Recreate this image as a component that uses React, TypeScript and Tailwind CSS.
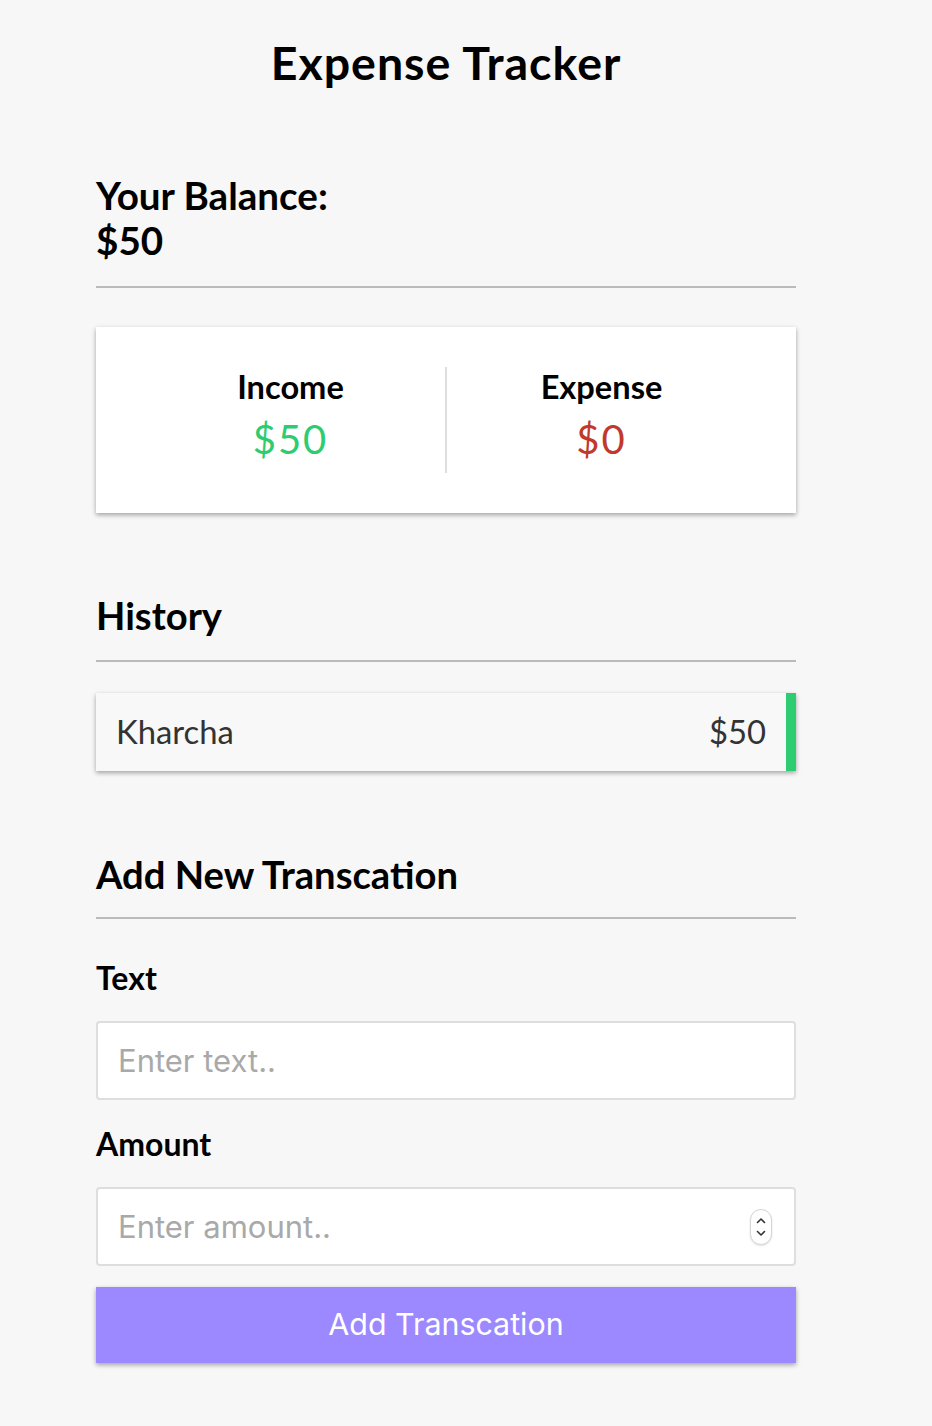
import { useState } from "react";

const lato = "font-['Lato','Noto_Sans',sans-serif]";
const ui = "font-['Inter','Roboto',sans-serif]";

function Spinner() {
  return (
    <div className="pointer-events-none absolute right-[24px] top-[22px] flex h-[36px] w-[22px] flex-col items-center justify-center gap-[6px] rounded-full border border-[#d6d6d6] bg-white shadow-[0_1px_2px_rgba(0,0,0,0.12)]">
      <svg width="10" height="7" viewBox="0 0 10 7" fill="none">
        <path d="M1.5 5.5L5 2L8.5 5.5" stroke="#333" strokeWidth="1.6" strokeLinecap="round" strokeLinejoin="round" />
      </svg>
      <svg width="10" height="7" viewBox="0 0 10 7" fill="none">
        <path d="M1.5 1.5L5 5L8.5 1.5" stroke="#333" strokeWidth="1.6" strokeLinecap="round" strokeLinejoin="round" />
      </svg>
    </div>
  );
}

export default function App() {
  const [text, setText] = useState("");
  const [amount, setAmount] = useState("");

  return (
    <div className={`min-h-[1426px] bg-[#f7f7f7] pl-[96px] text-black ${lato}`}>
      <div className="w-[700px] pb-[60px]">
        <h2 className="pt-[35px] text-center text-[46.5px] font-bold leading-[54px] tracking-[1px]">
          Expense Tracker
        </h2>

        <div className="mt-[84px] border-b-2 border-[#bbb] pb-[23px]">
          <h4 className="text-[38.6px] font-bold leading-[45px]">Your Balance:</h4>
          <h1 className="text-[38.6px] font-bold leading-[45px]">$50</h1>
        </div>

        <div className="mt-[39px] flex bg-white p-[40px] shadow-[0_2px_6px_rgba(0,0,0,0.12),0_2px_4px_rgba(0,0,0,0.24)]">
          <div className="flex-1 border-r-2 border-[#dedede] text-center">
            <h4 className="text-[32.6px] font-bold leading-[40px]">Income</h4>
            <p className="mb-[6px] mt-[4px] text-[40px] leading-[56px] tracking-[2px] text-[#2ecc71]">$50</p>
          </div>
          <div className="flex-1 text-center">
            <h4 className="text-[32.6px] font-bold leading-[40px]">Expense</h4>
            <p className="mb-[6px] mt-[4px] text-[40px] leading-[56px] tracking-[2px] text-[#c0392b]">$0</p>
          </div>
        </div>

        <h3 className="mt-[78px] border-b-2 border-[#bbb] pb-[21px] text-[38.2px] font-bold leading-[48px]">
          History
        </h3>
        <ul className="mt-[31px]">
          <li className="flex justify-between border-r-[10px] border-[#2ecc71] bg-[#f8f8f8] p-[20px] text-[32.8px] leading-[38px] text-[#333] shadow-[0_2px_6px_rgba(0,0,0,0.12),0_2px_4px_rgba(0,0,0,0.24)]">
            <span>Kharcha</span>
            <span>$50</span>
          </li>
        </ul>

        <h3 className="mt-[79px] border-b-2 border-[#bbb] pb-[19px] text-[38.2px] font-bold leading-[48px]">
          Add New Transcation
        </h3>

        <form onSubmit={(e) => e.preventDefault()}>
          <label className="mt-[40px] block text-[32px] font-bold leading-[38px]">Text</label>
          <input
            type="text"
            value={text}
            onChange={(e) => setText(e.target.value)}
            placeholder="Enter text.."
            className={`mt-[24px] block h-[79px] w-full rounded-[4px] border-2 border-[#dedede] bg-white px-[20px] text-[31px] text-[#333] outline-none placeholder:text-[#a9a9a9] ${ui}`}
          />

          <label className="mt-[25px] block text-[32px] font-bold leading-[38px]">Amount</label>
          <div className="relative mt-[24px]">
            <input
              type="number"
              value={amount}
              onChange={(e) => setAmount(e.target.value)}
              placeholder="Enter amount.."
              className={`block h-[79px] w-full rounded-[4px] border-2 border-[#dedede] bg-white px-[20px] text-[31px] text-[#333] outline-none [appearance:textfield] placeholder:text-[#a9a9a9] [&::-webkit-inner-spin-button]:appearance-none [&::-webkit-outer-spin-button]:appearance-none ${ui}`}
            />
            <Spinner />
          </div>

          <button
            type="submit"
            className={`mt-[21px] block h-[76px] w-full bg-[#9c88ff] text-[30.4px] text-white shadow-[0_2px_6px_rgba(0,0,0,0.12),0_2px_4px_rgba(0,0,0,0.24)] ${ui}`}
          >
            Add Transcation
          </button>
        </form>
      </div>
    </div>
  );
}
